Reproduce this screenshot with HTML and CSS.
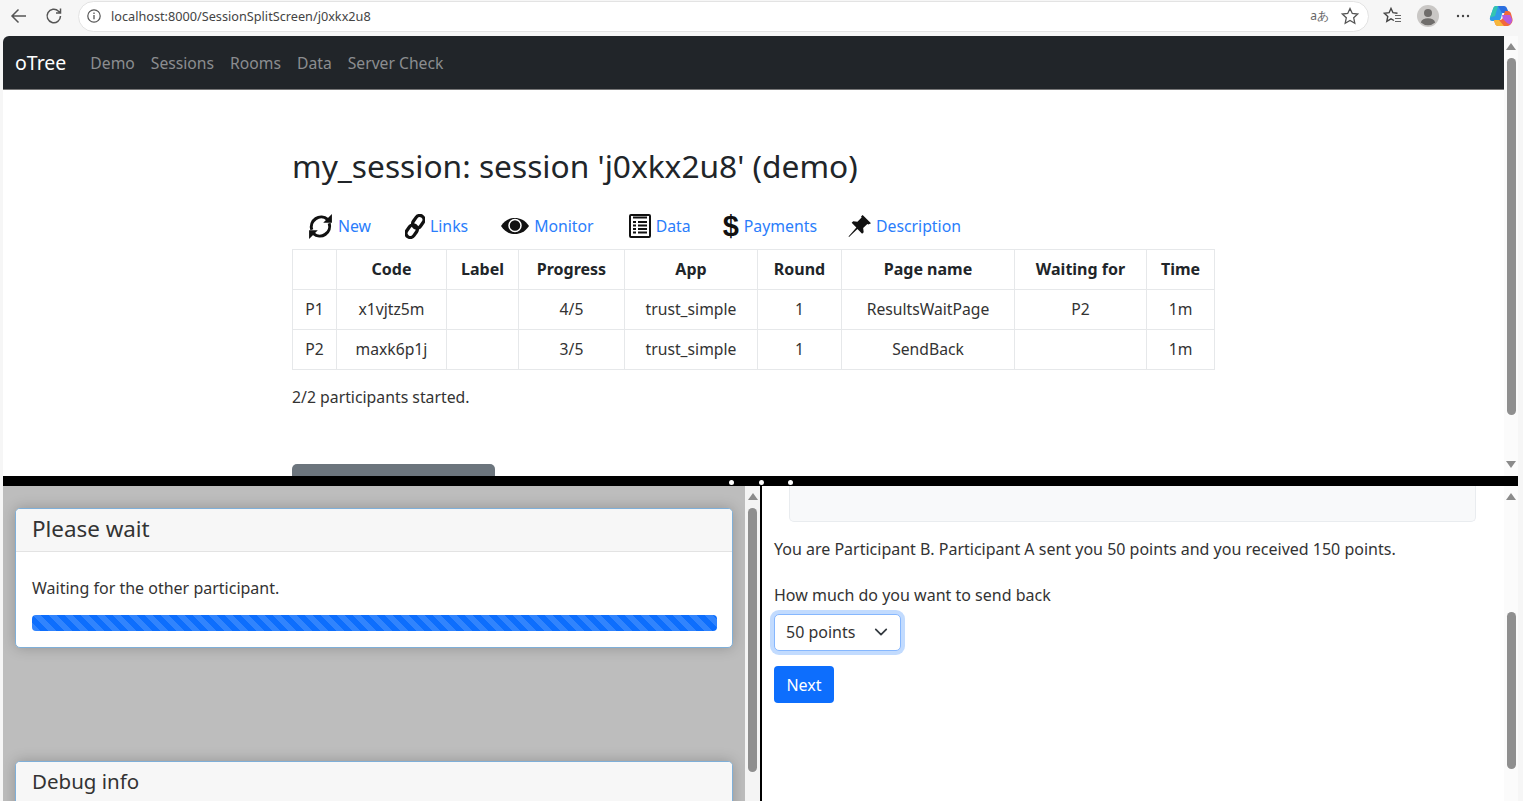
FILE: index.html
```html
<!DOCTYPE html>
<html lang="en">
<head>
  <meta charset="UTF-8">
  <title>my_session: session 'j0xkx2u8' (demo)</title>
  <link rel="stylesheet" href="styles.css">
</head>
<body>

  <div class="browser-bar">
    <svg class="bar-icon back" width="20" height="20" viewBox="0 0 20 20"><path d="M17 10H3M9.5 3.5 3 10l6.5 6.5" fill="none" stroke="#555" stroke-width="1.5"/></svg>
    <svg class="bar-icon reload" width="20" height="20" viewBox="0 0 20 20"><path d="M16.5 10a6.7 6.7 0 1 1-2-4.8L16.5 7M16.5 2.5V7H12" fill="none" stroke="#555" stroke-width="1.5"/></svg>
    <div class="address">
      <svg width="16" height="16" viewBox="0 0 16 16"><circle cx="8" cy="8" r="6.2" fill="none" stroke="#555" stroke-width="1.2"/><path d="M8 7v4.2M8 4.6v1.3" stroke="#555" stroke-width="1.3"/></svg>
      <span class="url">localhost:8000/SessionSplitScreen/j0xkx2u8</span>
      <span class="translate">aあ</span>
      <svg class="star" width="20" height="20" viewBox="0 0 20 20"><path d="m10 2.5 2.3 5 5.4.6-4 3.7 1.1 5.4-4.8-2.7-4.8 2.7 1.1-5.4-4-3.7 5.4-.6z" fill="none" stroke="#555" stroke-width="1.3"/></svg>
    </div>
    <svg class="bar-icon favs" width="20" height="20" viewBox="0 0 20 20"><path d="M11 14.5l-3-1.6-4.2 2.4 1-4.8-3.4-3.2 4.7-.6L8 2.5l2 4.2 4.5.6" fill="none" stroke="#444" stroke-width="1.4"/><path d="M12 9.5h6M12 12.5h6M12 15.5h6" stroke="#666" stroke-width="1.2"/></svg>
    <svg class="bar-icon avatar" width="22" height="22" viewBox="0 0 22 22"><circle cx="11" cy="11" r="11" fill="#c9c7c5"/><circle cx="11" cy="8" r="4" fill="#6f6d6b"/><path d="M3.8 17.5c.8-3 3.6-4.3 7.2-4.3s6.400 1.300 7.200 4.300a11 11 0 0 1-14.400 0z" fill="#6f6d6b"/></svg>
    <svg class="bar-icon dots" width="16" height="16" viewBox="0 0 16 16"><circle cx="3" cy="8" r="1.200" fill="#444"/><circle cx="8" cy="8" r="1.200" fill="#444"/><circle cx="13" cy="8" r="1.200" fill="#444"/></svg>
    <svg class="bar-icon copilot" width="24" height="24" viewBox="0 0 24 24">
      <path d="M7 2h8l-3 12c-.6 2-2 3-4 3H3c-2 0-2.500-2-2-3.500L4 5c.5-1.800 1.500-3 3-3z" fill="#2f9be8"/>
      <path d="M9 2h6c1.500 0 2.500 1 3 2.500L20 9h-7z" fill="#2b6fe0"/>
      <path d="M17 22H9c-1.500 0-2.500-1-3-2.500L5 16h6c1.500 0 2.500-1 3-2.500L16 7h3c1.500 0 2.500 1 3 2.500L23.500 15c.4 2-.5 4-2 5.500-1 1-2.500 1.500-4.500 1.500z" fill="#f2683c"/>
      <path d="M13 11h8l2 4c.4 2-.5 4-2 5.500l-3-1.500-4-4z" fill="#b55be0"/>
      <path d="M1 13.500 4 5c.5-1.800 1.500-3 3-3h2L6 12z" fill="#35c5b0"/>
      <path d="M9 22c-1.500 0-2.500-1-3-2.500L5 16h5l5 6z" fill="#f6b73c"/>
    </svg>
  </div>

  <div class="split">
    <div class="pane-top">
      <div class="pane-top-content">
        <nav class="navbar">
          <span class="brand">oTree</span>
          <a>Demo</a>
          <a>Sessions</a>
          <a>Rooms</a>
          <a>Data</a>
          <a>Server Check</a>
        </nav>

        <div class="container">
          <h1>my_session: session 'j0xkx2u8' (demo)</h1>

          <div class="session-tabs">
            <a class="tab-new">
              <svg width="25" height="27" viewBox="1.500 1 23 24"><path d="M5 16a9 9 0 0 1 14.500-9.500M21 10a9 9 0 0 1-14.500 9.500" fill="none" stroke="#111" stroke-width="2.800"/><path d="M23.500 1.500v8h-8zM2.500 24.500v-8h8z" fill="#111"/></svg>
              New
            </a>
            <a class="tab-links">
              <svg width="20" height="25" viewBox="0 -1 20 26"><g fill="none" stroke="#111" stroke-width="3.400" transform="rotate(35 10 12)"><rect x="5.500" y="-1" width="9" height="14" rx="4.500"/><rect x="5.500" y="11" width="9" height="14" rx="4.500"/></g></svg>
              Links
            </a>
            <a class="tab-monitor">
              <svg width="28" height="20" viewBox="1 0 28 20"><path d="M1 10C5 4 10 2 15 2s10 2 14 8c-4 6-9 8-14 8S5 16 1 10z" fill="#111"/><circle cx="15" cy="9.500" r="6" fill="none" stroke="#fff" stroke-width="1.500"/><circle cx="15" cy="9.500" r="3.500" fill="#111"/></svg>
              Monitor
            </a>
            <a class="tab-data">
              <svg width="22" height="24" viewBox="0 0 22 24"><rect x="1" y="1" width="20" height="22" rx="1" fill="#fff" stroke="#111" stroke-width="2"/><path d="M4 3.500h14" stroke="#111" stroke-width="2"/><path d="M4 8h3M9 8h9M4 11.500h3M9 11.500h9M4 15h3M9 15h9M4 18.500h3M9 18.500h9" stroke="#111" stroke-width="2"/></svg>
              Data
            </a>
            <a class="tab-payments">
              <span class="dollar">$</span>
              Payments
            </a>
            <a class="tab-description">
              <svg width="23" height="23" viewBox="1 1 22 22"><path d="M15 1l8 8-2.500 1-1-.5-4 4 .5 4-1.500 1.500-4.500-4.500L2 22l-.5-.5 7.500-8.500-4.500-4.500L6 7l4 .5 4-4-.5-1z" fill="#111"/></svg>
              Description
            </a>
          </div>

          <table class="session-table">
            <thead>
              <tr>
                <th class="col-id"></th>
                <th class="col-code">Code</th>
                <th class="col-label">Label</th>
                <th class="col-progress">Progress</th>
                <th class="col-app">App</th>
                <th class="col-round">Round</th>
                <th class="col-page">Page name</th>
                <th class="col-wait">Waiting for</th>
                <th class="col-time">Time</th>
              </tr>
            </thead>
            <tbody>
              <tr>
                <td>P1</td><td>x1vjtz5m</td><td></td><td>4/5</td><td>trust_simple</td><td>1</td><td>ResultsWaitPage</td><td>P2</td><td>1m</td>
              </tr>
              <tr>
                <td>P2</td><td>maxk6p1j</td><td></td><td>3/5</td><td>trust_simple</td><td>1</td><td>SendBack</td><td></td><td>1m</td>
              </tr>
            </tbody>
          </table>

          <p class="started">2/2 participants started.</p>
          <div class="btn-gray"></div>
        </div>
      </div>
      <div class="scrollbar">
        <span class="arrow-up"></span>
        <span class="thumb thumb-top"></span>
        <span class="arrow-down"></span>
      </div>
    </div>

    <div class="divider">
      <span class="dot"></span><span class="dot"></span><span class="dot"></span>
    </div>

    <div class="pane-bottom">
      <div class="frame-left">
        <div class="frame-left-content">
          <div class="card">
            <div class="card-header">Please wait</div>
            <div class="card-body">
              <p>Waiting for the other participant.</p>
              <div class="progress"></div>
            </div>
          </div>
          <div class="card card-debug">
            <div class="card-header">Debug info</div>
          </div>
        </div>
        <div class="scrollbar scrollbar-left">
          <span class="arrow-up"></span>
          <span class="thumb thumb-left"></span>
        </div>
      </div>

      <div class="frame-right">
        <div class="frame-right-content">
          <div class="well"></div>
          <p class="instructions">You are Participant B. Participant A sent you 50 points and you received 150 points.</p>
          <label class="field-label">How much do you want to send back</label>
          <div class="select-box">
            <span>50 points</span>
            <svg width="14" height="14" viewBox="0 0 16 16"><path d="m2 5 6 6 6-6" fill="none" stroke="#343a40" stroke-width="2" stroke-linecap="round" stroke-linejoin="round"/></svg>
          </div>
          <button class="btn-next">Next</button>
        </div>
        <div class="scrollbar scrollbar-right">
          <span class="arrow-up"></span>
          <span class="thumb thumb-right"></span>
        </div>
      </div>
    </div>
  </div>

</body>
</html>
```

FILE: styles.css
```css
html, body {
  margin: 0;
  height: 801px;
  overflow: hidden;
}

body {
  font-family: "Noto Sans", "Open Sans", sans-serif;
  font-size: 15.8px;
  color: #212529;
  background-color: #f6f6f6;
  display: flex;
  flex-direction: column;
}

/* Barra del navegador */
.browser-bar {
  height: 36px;
  display: flex;
  align-items: center;
  flex-shrink: 0;
  padding-bottom: 4px;
  box-sizing: border-box;
}

.bar-icon {
  flex-shrink: 0;
}

.back { margin-left: 9px; }
.reload { margin-left: 15px; }

.address {
  margin-left: 14px;
  width: 1291px;
  height: 31px;
  box-sizing: border-box;
  background-color: #fff;
  border: 1px solid #e3e3e3;
  border-radius: 16px;
  display: flex;
  align-items: center;
  padding: 0 8px 0 7px;
  font-size: 12.700px;
  color: #444;
}

.url {
  margin-left: 9px;
  flex: 1;
}

.translate {
  font-size: 12px;
  color: #666;
  margin-right: 11px;
}

.favs { margin-left: 14px; }
.avatar { margin-left: 14px; }
.dots { margin-left: 16px; }
.copilot { margin-left: 18px; }

/* Ventana dividida */
.split {
  flex: 1;
  display: flex;
  flex-direction: column;
  margin-left: 3px;
  width: 1515px;
  background-color: #fff;
  min-height: 0;
  border-top-left-radius: 6px;
}

.pane-top {
  height: 440px;
  display: flex;
  overflow: hidden;
  flex-shrink: 0;
}

.pane-top-content {
  width: 1501px;
  overflow: hidden;
}

.navbar {
  height: 54px;
  background-color: #212529;
  display: flex;
  align-items: center;
  padding-left: 12px;
  box-sizing: border-box;
  border-bottom: 1px solid #777;
  border-top-left-radius: 6px;
  color: #8b8d90;
  font-size: 15.700px;
}

.navbar a {
  margin-right: 16px;
}

.brand {
  color: #fff;
  font-size: 19.500px;
  margin-right: 24px;
}

.container {
  margin-left: 289px;
  width: 923px;
}

h1 {
  font-size: 31.700px;
  font-weight: 400;
  margin: 55px 0 0 0;
  line-height: 42px;
}

.session-tabs {
  display: flex;
  align-items: center;
  height: 30px;
  margin-top: 24px;
  padding-left: 16px;
  color: #2a7dfb;
}

.session-tabs a {
  display: flex;
  align-items: center;
  gap: 5px;
}

.tab-links { margin-left: 34px; }
.tab-monitor { margin-left: 33px; }
.tab-data { margin-left: 35px; }
.tab-payments { margin-left: 32px; }
.tab-description { margin-left: 31px; }

.dollar {
  font-family: "Liberation Sans", sans-serif;
  font-weight: 700;
  font-size: 29px;
  line-height: 30px;
  color: #111;
}

.session-table {
  width: 922px;
  margin-top: 8px;
  border-collapse: collapse;
  table-layout: fixed;
  color: #333;
}

.session-table th,
.session-table td {
  border: 1px solid #e6e8ea;
  text-align: center;
  height: 40px;
  padding: 0 0 2px 0;
  box-sizing: border-box;
  font-size: 15.700px;
}

.session-table th {
  font-size: 16px;
  font-weight: 700;
  color: #212529;
}

.col-id { width: 44px; }
.col-code { width: 110px; }
.col-label { width: 72px; }
.col-progress { width: 106px; }
.col-app { width: 133px; }
.col-round { width: 84px; }
.col-page { width: 173px; }
.col-wait { width: 132px; }
.col-time { width: 68px; }

.started {
  margin: 15px 0 0 0;
  line-height: 24px;
  color: #333;
}

.btn-gray {
  margin-top: 55px;
  width: 203px;
  height: 38px;
  background-color: #6c757d;
  border-radius: 5px;
}

/* Barras de desplazamiento */
.scrollbar {
  width: 14px;
  flex-shrink: 0;
  background-color: #fbfbfb;
  display: flex;
  flex-direction: column;
  align-items: center;
}

.arrow-up {
  margin-top: 7px;
  border-left: 5px solid transparent;
  border-right: 5px solid transparent;
  border-bottom: 7px solid #8a8a8a;
}

.arrow-down {
  margin-top: auto;
  margin-bottom: 8px;
  border-left: 5px solid transparent;
  border-right: 5px solid transparent;
  border-top: 7px solid #8a8a8a;
}

.thumb {
  width: 9px;
  border-radius: 5px;
  background-color: #8f8f8f;
}

.thumb-top {
  margin-top: 8px;
  height: 357px;
}

.divider {
  height: 10px;
  background-color: #000;
  display: flex;
  align-items: center;
  gap: 24.500px;
  padding-left: 726px;
  flex-shrink: 0;
  box-sizing: border-box;
}

.dot {
  width: 5px;
  height: 5px;
  border-radius: 50%;
  background-color: #fff;
  margin-top: 2px;
}

.pane-bottom {
  flex: 1;
  display: flex;
  min-height: 0;
}

/* Panel izquierdo */
.frame-left {
  width: 757px;
  display: flex;
  flex-shrink: 0;
  border-right: 2px solid #000;
  overflow: hidden;
}

.frame-left-content {
  width: 742px;
  background-color: #bdbdbd;
  padding: 22px 12px 0 12px;
  box-sizing: border-box;
  overflow: hidden;
}

.scrollbar-left {
  width: 15px;
  background-color: #f4f4f4;
}

.thumb-left {
  margin-top: 8px;
  height: 264px;
}

.card {
  background-color: #fff;
  border: 1px solid #7fafd8;
  border-radius: 5px;
  box-shadow: 0 0 14px rgba(0,0,0,0.22);
  overflow: hidden;
}

.card-header {
  height: 43px;
  box-sizing: border-box;
  background-color: #f7f7f7;
  border-bottom: 1px solid #e3e3e3;
  padding-left: 16px;
  font-size: 22.400px;
  line-height: 40px;
  color: #333;
}

.card-debug .card-header {
  font-size: 20.500px;
  line-height: 38px;
}

.card-body {
  padding: 24px 15px 16px 16px;
  font-size: 16px;
  color: #333;
}

.card-body p {
  margin: 0;
  line-height: 24px;
}

.progress {
  margin-top: 15px;
  height: 16px;
  border-radius: 4px;
  background-color: #0d6efd;
  background-image: linear-gradient(45deg, rgba(255,255,255,.15) 25%, transparent 25%, transparent 50%, rgba(255,255,255,.15) 50%, rgba(255,255,255,.15) 75%, transparent 75%, transparent);
  background-size: 16px 16px;
}

.card-debug {
  margin-top: 113px;
  height: 60px;
}

/* Panel derecho */
.frame-right {
  flex: 1;
  display: flex;
  min-width: 0;
}

.frame-right-content {
  width: 742px;
  padding-left: 12px;
  box-sizing: border-box;
  font-size: 16px;
}

.well {
  width: 687px;
  height: 36px;
  margin-left: 15px;
  background-color: #f8f9fa;
  border: 1px solid #e9ecef;
  border-top: none;
  border-radius: 0 0 5px 5px;
  box-sizing: border-box;
}

.instructions {
  margin: 15px 0 0 0;
  line-height: 24px;
  color: #333;
}

.field-label {
  display: block;
  margin-top: 22px;
  line-height: 24px;
  color: #333;
}

.select-box {
  margin-top: 7px;
  width: 127px;
  height: 37px;
  box-sizing: border-box;
  display: flex;
  align-items: center;
  justify-content: space-between;
  padding: 0 12px 2px 11px;
  background-color: #fff;
  border: 1px solid #86b7fe;
  border-radius: 5px;
  box-shadow: 0 0 0 4px rgba(13,110,253,.25);
  color: #333;
}

.btn-next {
  display: block;
  margin-top: 15px;
  width: 60px;
  height: 37px;
  padding: 0;
  font-family: inherit;
  font-size: 16px;
  color: #fff;
  background-color: #0d6efd;
  border: none;
  border-radius: 4px;
}

.thumb-right {
  margin-top: 112px;
  height: 157px;
}
```
